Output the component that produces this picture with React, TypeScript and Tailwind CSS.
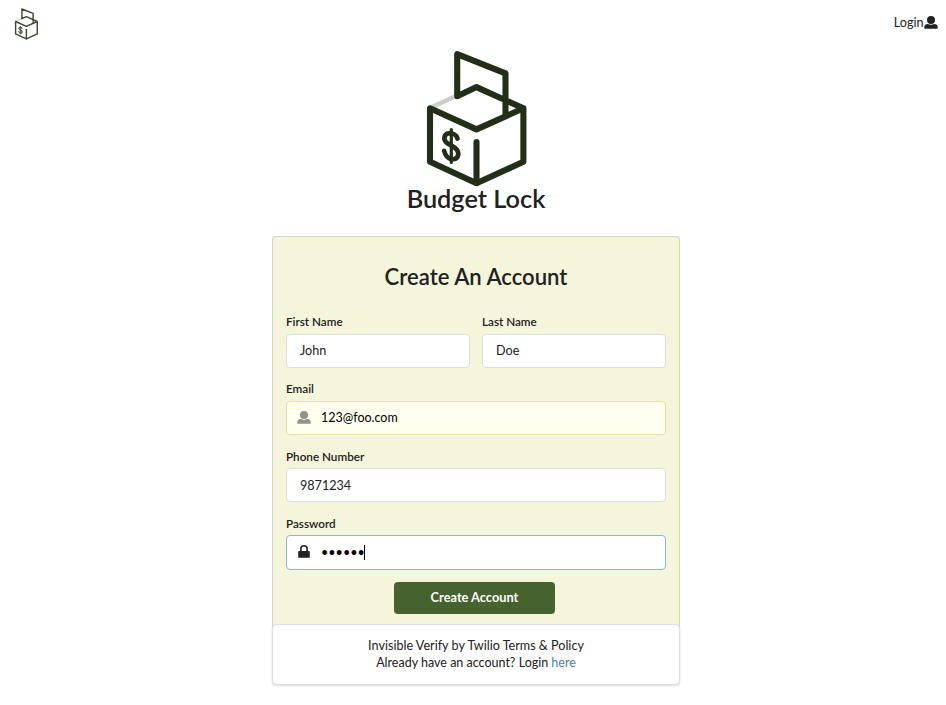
import React from "react";

function Logo({ className }: { className: string }) {
  return (
    <svg viewBox="26 10 102 138" className={className} fill="none" strokeLinejoin="round" strokeLinecap="round">
      <path d="M33 66.500 L55 56.500" stroke="#cccccc" strokeWidth="4.6" />
      <g stroke="currentColor" strokeWidth="6.1">
        <path d="M105.500 74 V33.300 L57.200 14.200 V56.300 L76.500 47.100 L123.400 68.300 L76.500 89.400 L30 68.300 V121.800 L76.500 143.300 L123.400 121.800 V68.300" />
        <path d="M76.500 102 V143" />
      </g>
      <g stroke="currentColor">
        <path d="M51.300 89.500 V122.500" strokeWidth="3.2" />
        <path d="M57.500 98.600 C56.400 94.800 52.400 92.800 48.500 93.400 C44.300 94.100 43.300 98.800 45.700 101.700 C48.300 104.800 53.900 105.800 56.800 109.700 C59.700 113.800 58.100 118.700 53.700 119.200 C49.100 119.600 45.400 116.200 44.100 110.800" strokeWidth="4.7" />
      </g>
    </svg>
  );
}

function UserIcon({ className }: { className: string }) {
  return (
    <svg viewBox="0 0 14 14" preserveAspectRatio="none" className={className} fill="currentColor">
      <ellipse cx="7" cy="4.3" rx="4" ry="4.200" />
      <path d="M0.3 13.2 V11.8 C0.3 9.8 1.8 8.8 3.8 8.6 C5.7 9.7 8.3 9.7 10.2 8.6 C12.2 8.8 13.7 9.8 13.7 11.8 V13.2 Q13.7 13.7 13 13.7 H1 Q0.3 13.7 0.3 13.2 Z" />
    </svg>
  );
}

function LockIcon({ className }: { className: string }) {
  return (
    <svg viewBox="0 0 12 13" className={className}>
      <path d="M2.900 6.500 V3.900 a3.100 3.100 0 0 1 6.200 0 V6.500" fill="none" stroke="currentColor" strokeWidth="1.6" />
      <rect x="0.200" y="6" width="11.600" height="6.800" rx="0.800" fill="currentColor" />
    </svg>
  );
}

const label = "block h-[16px] text-[11.7px] leading-[16px] font-semibold";
const box = "flex items-center h-[34px] rounded-[4px] border border-[#dededf] bg-white px-[13px]";

export default function App() {
  return (
    <div className="h-[705px] overflow-hidden bg-white font-['Lato',sans-serif] text-[12.6px] leading-[17px] text-[#212121]">
      <header className="flex h-[50px] items-start justify-between pl-[14px] pr-[8px]">
        <Logo className="mt-[8px] h-[32px] w-[25px] text-[#3c4633]" />
        <a className="mt-[14px] flex items-center">
          Login
          <UserIcon className="ml-[0.5px] h-[13px] w-[14px]" />
        </a>
      </header>
      <div className="flex flex-col items-center pl-[6px]">
        <Logo className="ml-px h-[138px] w-[102px] text-[#232e19]" />
        <h1 className="-mt-[6px] h-[33px] text-[25.3px] leading-[32px] font-semibold">Budget Lock</h1>
        <main className="mt-[21px] w-[408px]">
          <form className="h-[393px] rounded-t-[4px] border border-b-0 border-[#d4d4c1] bg-[#f5f5dc] px-[13px] pt-[25px]">
            <h2 className="h-[30px] text-center text-[22.1px] leading-[30px] font-semibold">Create An Account</h2>
            <div className="mt-[21px] grid grid-cols-2 gap-[12px]">
              <div>
                <label className={label}>First Name</label>
                <div className={box + " mt-[5px] pb-[2px]"}>John</div>
              </div>
              <div>
                <label className={label}>Last Name</label>
                <div className={box + " mt-[5px] pb-[2px]"}>Doe</div>
              </div>
            </div>
            <label className={label + " mt-[12px]"}>Email</label>
            <div className="mt-[5px] flex h-[34px] items-center rounded-[4px] border border-[#e5dfa1] bg-[#fffff0] pb-[2px] pl-[10px] text-[12.5px] text-black">
              <UserIcon className="mr-[10px] h-[13px] w-[14px] text-[#92928a]" />
              123@foo.com
            </div>
            <label className={label + " mt-[13px]"}>Phone Number</label>
            <div className={box + " mt-[4px]"}>9871234</div>
            <label className={label + " mt-[13px]"}>Password</label>
            <div className="mt-[4px] flex h-[35px] items-center rounded-[4px] border border-[#85b7d9] bg-white pl-[11px] text-black">
              <LockIcon className="mr-[11px] mb-[2px] h-[13px] w-[12px] text-[#212121]" />
              <span className="-mr-px">••••••</span>
              <span className="h-[15px] w-px bg-black" />
            </div>
            <button className="mt-[12px] ml-[108px] block h-[32px] w-[161px] rounded-[4px] bg-[#46622e] pb-[2px] text-[12.8px] font-bold text-white">
              Create Account
            </button>
          </form>
          <div className="-mt-[5px] h-[61px] rounded-[4px] border border-[#dededf] bg-white pt-[12px] text-center shadow-[0_1px_2px_0_rgba(34,36,38,0.15)]">
            <p>Invisible Verify by Twilio Terms &amp; Policy</p>
            <p className="text-[12.5px]">
              Already have an account? Login <a className="text-[#4183c4]">here</a>
            </p>
          </div>
        </main>
      </div>
    </div>
  );
}
